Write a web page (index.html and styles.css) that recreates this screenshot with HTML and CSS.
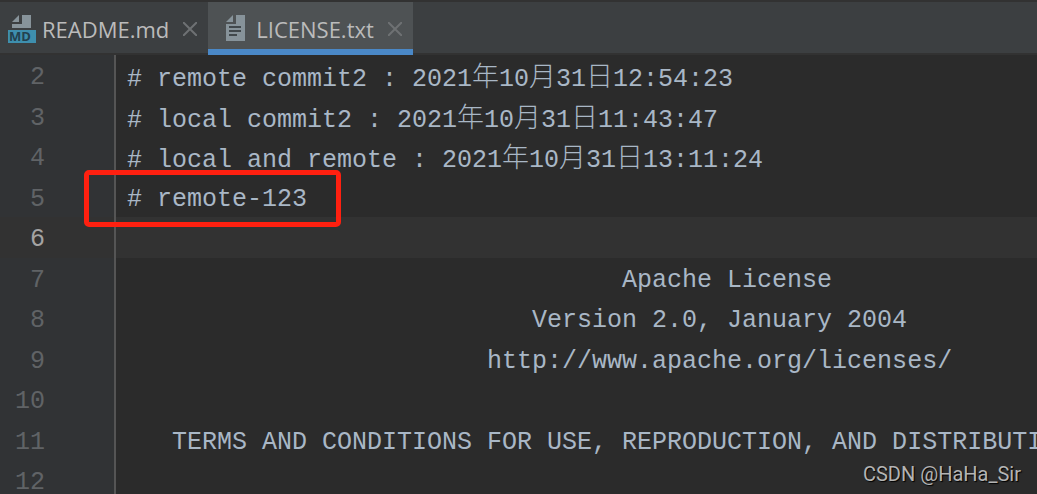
FILE: index.html
```html
<!DOCTYPE html>
<html lang="en">
<head>
    <meta charset="UTF-8">
    <title>LICENSE.txt</title>
    <link rel="stylesheet" href="styles.css">
</head>
<body>
    <header class="tabs">
        <div class="tab">
            <button type="button" class="tab-name">
                <svg class="file-icon" viewBox="0 0 28 28" aria-hidden="true">
                    <path fill="#87939a" d="M14 0h9v13H4V9h10z"/>
                    <path fill="#87939a" d="M4 7l7-7v7z"/>
                    <path fill="#3e8fae" d="M0 15h28v13H0z"/>
                    <text class="badge" x="1" y="26">MD</text>
                </svg>
                README.md
            </button>
            <button type="button" class="close" aria-label="Close README.md">
                <svg viewBox="0 0 14 14" aria-hidden="true"><path d="M0 0l14 14M14 0L0 14"/></svg>
            </button>
        </div>
        <div class="tab selected">
            <button type="button" class="tab-name">
                <svg class="file-icon" viewBox="0 0 28 28" aria-hidden="true">
                    <path fill="#87939a" d="M14 0h9v26H4V9h10z"/>
                    <path fill="#87939a" d="M4 7l7-7v7z"/>
                    <path fill="none" stroke="#41484c" stroke-width="2" d="M7 12h12M7 16h12M7 20h8"/>
                </svg>
                LICENSE.txt
            </button>
            <button type="button" class="close" aria-label="Close LICENSE.txt">
                <svg viewBox="0 0 14 14" aria-hidden="true"><path d="M0 0l14 14M14 0L0 14"/></svg>
            </button>
        </div>
    </header>

    <main class="editor">
        <div class="line"><span class="number">2</span><code># remote commit2 : 2021<span class="cjk">年</span>10<span class="cjk">月</span>31<span class="cjk">日</span>12:54:23</code></div>
        <div class="line"><span class="number">3</span><code># local commit2 : 2021<span class="cjk">年</span>10<span class="cjk">月</span>31<span class="cjk">日</span>11:43:47</code></div>
        <div class="line"><span class="number">4</span><code># local and remote : 2021<span class="cjk">年</span>10<span class="cjk">月</span>31<span class="cjk">日</span>13:11:24</code></div>
        <div class="line marked"><span class="number">5</span><code># remote-123</code></div>
        <div class="line current"><span class="number">6</span><code></code></div>
        <div class="line"><span class="number">7</span><code>                                 Apache License</code></div>
        <div class="line"><span class="number">8</span><code>                           Version 2.0, January 2004</code></div>
        <div class="line"><span class="number">9</span><code>                        http://www.apache.org/licenses/</code></div>
        <div class="line"><span class="number">10</span><code></code></div>
        <div class="line"><span class="number">11</span><code>   TERMS AND CONDITIONS FOR USE, REPRODUCTION, AND DISTRIBUTION</code></div>
        <div class="line"><span class="number">12</span><code></code></div>
    </main>

    <div class="watermark">CSDN @HaHa_Sir</div>
</body>
</html>
```

FILE: styles.css
```css
*,
*::after {
    box-sizing: border-box;
}
body {
    margin: 0;
    height: 100vh;
    overflow: hidden;
    display: flex;
    flex-direction: column;
    background: #2b2b2b;
}
button {
    padding: 0;
    border: none;
    background: none;
    color: inherit;
    font: inherit;
    cursor: pointer;
}

/* tabs */
.tabs {
    display: flex;
    flex-shrink: 0;
    height: 55px;
    border-top: 2px solid #323232;
    background: linear-gradient(to top, #323232 2px, #3c3f41 2px);
    color: #bbbbbb;
    font-family: "Open Sans", "Noto Sans", sans-serif;
    font-size: 22px;
}
.tab {
    display: flex;
    align-items: center;
    gap: 14px;
    padding: 0 11px 0 8px;
}
.tab.selected {
    padding-left: 14px;
    background: linear-gradient(to top, #4a88c7 6px, #4e5254 6px);
}
.tab-name {
    display: flex;
    align-items: center;
    gap: 6px;
}
.file-icon {
    width: 28px;
    height: 28px;
}
.badge {
    fill: #23414e;
    font-family: "Open Sans", sans-serif;
    font-size: 13px;
    font-weight: 700;
}
.close {
    display: flex;
}
.close svg {
    width: 14px;
    height: 14px;
    fill: none;
    stroke: #6e7173;
    stroke-width: 2;
}

/* editor */
.editor {
    flex: 1;
    display: grid;
    grid-template-rows: repeat(6, 41px 40px);
    min-height: 0;
    overflow: hidden;
    color: #a9b7c6;
    font-family: "Liberation Mono", "Noto Sans CJK SC", monospace;
    font-size: 25px;
    line-height: 34px;
}
.line {
    position: relative;
    display: grid;
    grid-template-columns: 116px 1fr;
}
.number {
    padding: 6px 69px 0 0;
    border-right: 2px solid #555555;
    background: #313335;
    color: #606366;
    text-align: right;
}
.line code {
    padding: 6px 0 0 11px;
    font: inherit;
    white-space: pre;
}
.cjk {
    font-family: "Noto Sans CJK SC", sans-serif;
    font-size: 27px;
    font-weight: 300;
    line-height: 1;
}
.current,
.current .number {
    background: #323232;
}
.current .number {
    color: #a4a3a3;
}
.marked::after {
    content: "";
    position: absolute;
    z-index: 1;
    top: -7px;
    left: 84px;
    width: 257px;
    height: 57px;
    border: 5px solid #ff2010;
    border-radius: 5px;
}

.watermark {
    position: absolute;
    right: 16px;
    bottom: 8px;
    color: #b4b4b4;
    font-family: Roboto, sans-serif;
    font-size: 20px;
    line-height: 24px;
    text-shadow: 1px 1px 1px #000000;
}
```
